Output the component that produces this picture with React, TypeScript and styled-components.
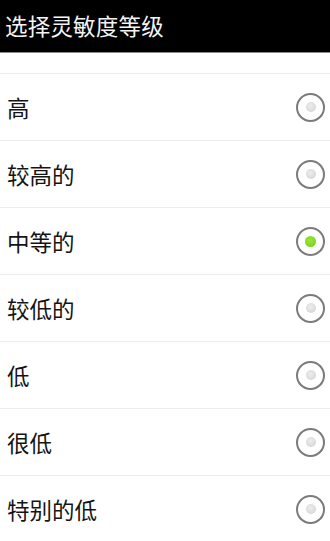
import React, { useState } from "react";
import styled, { createGlobalStyle } from "styled-components";

const GlobalStyle = createGlobalStyle`
  html, body {
    margin: 0;
    padding: 0;
    background: #ffffff;
  }
  body {
    font-family: "Noto Sans CJK SC", "Noto Sans", sans-serif;
  }
`;

const levels = ["高", "较高的", "中等的", "较低的", "低", "很低", "特别的低"];

const App: React.FC = () => {
  const [selected, setSelected] = useState(2);

  return (
    <Page>
      <GlobalStyle />
      <Header>
        <Title>选择灵敏度等级</Title>
      </Header>
      <Spacer />
      <List>
        {levels.map((label, i) => (
          <Row key={label} onClick={() => setSelected(i)}>
            <Label>{label}</Label>
            <Radio>
              <Dot $on={i === selected} />
            </Radio>
          </Row>
        ))}
      </List>
    </Page>
  );
};

export default App;

const Page = styled.div`
  width: 330px;
  height: 541px;
  overflow: hidden;
  background: #fff;
`;

const Header = styled.div`
  height: 52px;
  background: #000;
  border-bottom: 1px solid #8a8a8a;
  display: flex;
  align-items: center;
  padding-left: 5px;
`;

const Title = styled.span`
  color: #f4f4f4;
  font-size: 22.5px;
  letter-spacing: 0.2px;
  line-height: 1;
  margin-top: -2px;
`;

const Spacer = styled.div`
  height: 20px;
`;

const List = styled.div`
  display: flex;
  flex-direction: column;
`;

const Row = styled.div`
  height: 66px;
  border-top: 1px solid #ececec;
  display: flex;
  align-items: center;
  justify-content: space-between;
  padding: 0 5px 0 7px;
  cursor: pointer;
`;

const Label = styled.span`
  font-size: 22.5px;
  color: #141414;
  line-height: 1;
`;

const Radio = styled.div`
  width: 25px;
  height: 25px;
  border: 2px solid #7b7b7b;
  border-radius: 50%;
  display: flex;
  align-items: center;
  justify-content: center;
  background: #fff;
`;

const Dot = styled.div<{ $on: boolean }>`
  width: ${(p) => (p.$on ? 11 : 10)}px;
  height: ${(p) => (p.$on ? 11 : 10)}px;
  border-radius: 50%;
  background: ${(p) =>
    p.$on
      ? "radial-gradient(circle at 45% 40%, #9ae83c, #6fcb17)"
      : "radial-gradient(circle at 45% 40%, #eeeeee, #cfcfcf)"};
`;
